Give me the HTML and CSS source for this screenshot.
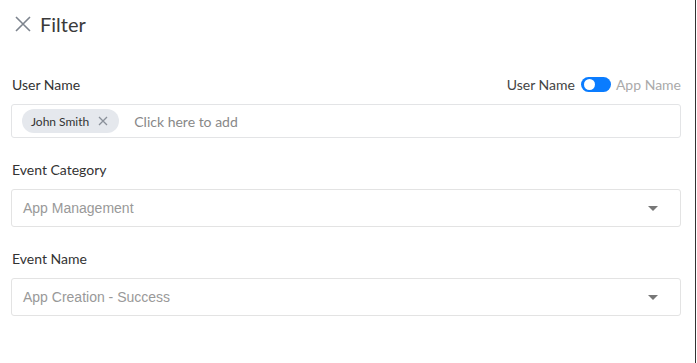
FILE: index.html
```html
<!DOCTYPE html>
<html lang="en">
<head>
    <meta charset="UTF-8">
    <title>Filter</title>
    <link rel="stylesheet" href="styles.css">
</head>
<body>
    <div class="panel">
        <div class="header">
            <svg class="close" width="16" height="16" viewBox="0 0 16 16">
                <path d="M1 1L15 15M15 1L1 15" stroke="#7d848e" stroke-width="1.6" fill="none"/>
            </svg>
            <span class="title">Filter</span>
        </div>

        <div class="field">
            <div class="label-row">
                <span class="label">User Name</span>
                <div class="switch-wrap">
                    <span class="on">User Name</span>
                    <span class="switch"><span class="knob"></span></span>
                    <span class="off">App Name</span>
                </div>
            </div>
            <div class="tag-input">
                <span class="chip">John Smith
                    <svg width="10" height="10" viewBox="0 0 10 10"><path d="M1 1L9 9M9 1L1 9" stroke="#8a9099" stroke-width="1.3"/></svg>
                </span>
                <span class="placeholder">Click here to add</span>
            </div>
        </div>

        <div class="field">
            <div class="label-row"><span class="label">Event Category</span></div>
            <div class="select">
                <span>App Management</span>
                <span class="caret"></span>
            </div>
        </div>

        <div class="field">
            <div class="label-row"><span class="label">Event Name</span></div>
            <div class="select">
                <span>App Creation - Success</span>
                <span class="caret"></span>
            </div>
        </div>
    </div>
</body>
</html>
```

FILE: styles.css
```css
body {
    margin: 0;
    background: #fff;
    font-family: Lato, "Open Sans", sans-serif;
    color: #333;
}
.panel {
    width: 696px;
    height: 363px;
    padding: 0 14px 0 11px;
    box-sizing: border-box;
    border-right: 1px solid #333;
}
.header {
    display: flex;
    align-items: center;
    height: 48px;
    padding-left: 4px;
}
.close {
    margin-right: 9px;
}
.title {
    font-size: 20px;
    color: #3a3a3a;
}
.field {
    margin-top: 26px;
}
.field + .field {
    margin-top: 21px;
}
.label-row {
    display: flex;
    justify-content: space-between;
    align-items: center;
    height: 20px;
    margin-bottom: 10px;
    padding-left: 1px;
}
.label {
    font-size: 14px;
    color: #333;
}
.switch-wrap {
    display: flex;
    align-items: center;
    font-size: 14px;
}
.on { color: #444; }
.off { color: #aaa; }
.switch {
    width: 30px;
    height: 15px;
    border-radius: 8px;
    background: #0a7cff;
    margin: 0 5px 0 6px;
    position: relative;
}
.knob {
    position: absolute;
    left: 3px;
    top: 2px;
    width: 11px;
    height: 11px;
    border-radius: 50%;
    background: #fff;
}
.tag-input {
    display: flex;
    align-items: center;
    height: 34px;
    border: 1px solid #e3e4e6;
    border-radius: 3px;
    padding-left: 10px;
    box-sizing: border-box;
}
.chip {
    display: flex;
    align-items: center;
    gap: 9px;
    height: 24px;
    padding: 0 11px 0 9px;
    border-radius: 12px;
    background: #e5e8ed;
    font-size: 12px;
    color: #333;
}
.placeholder {
    margin-left: 15px;
    font-size: 14px;
    color: #888;
}
.select {
    display: flex;
    align-items: center;
    justify-content: space-between;
    height: 38px;
    box-sizing: border-box;
    border: 1px solid #e3e3e3;
    border-radius: 3px;
    padding: 0 22px 0 11px;
    font-family: "Liberation Sans", Arial, sans-serif;
    font-size: 14px;
    color: #999;
}
.caret {
    width: 0;
    height: 0;
    border-left: 5px solid transparent;
    border-right: 5px solid transparent;
    border-top: 5px solid #777;
}
```
